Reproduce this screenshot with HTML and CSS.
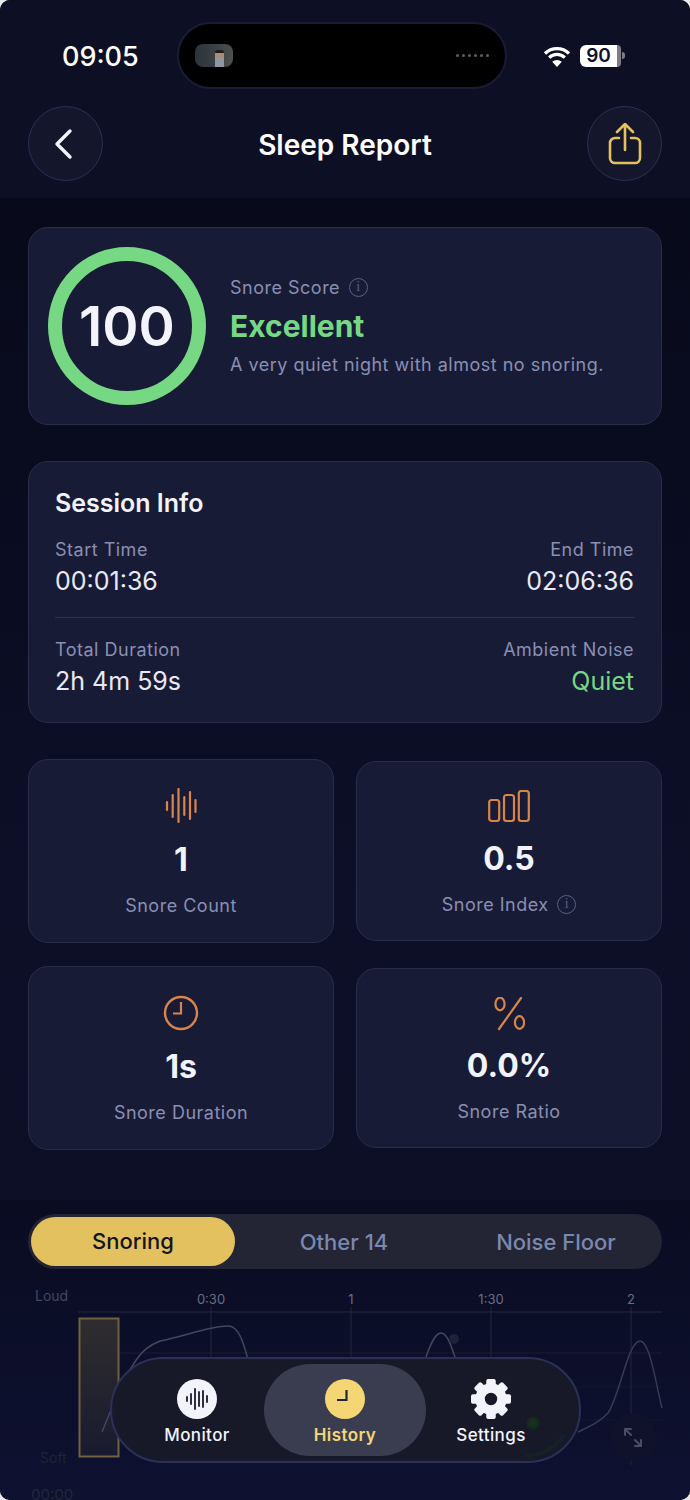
FILE: index.html
```html
<!DOCTYPE html>
<html lang="en">
<head>
    <meta charset="UTF-8">
    <meta name="viewport" content="width=device-width, initial-scale=1.0">
    <title>Sleep Report</title>
    <link rel="stylesheet" href="styles.css">
</head>
<body>
    <div class="screen">
        <div class="header">
            <div class="status">
                <span class="clock">09:05</span>
                <div class="island">
                    <div class="thumb"><span class="thumb-man"></span></div>
                    <div class="dots"><i></i><i></i><i></i><i></i><i></i><i></i></div>
                </div>
                <div class="status-right">
                    <svg class="wifi" width="28" height="22" viewBox="0 0 28 22">
                        <path d="M2 8.500a17 17 0 0 1 24 0M6.200 12.600a11 11 0 0 1 15.600 0" fill="none" stroke="#fff" stroke-width="3.200"/>
                        <path d="M14 22l-4.800-5.200a7 7 0 0 1 9.600 0z" fill="#fff"/>
                    </svg>
                    <span class="battery">90</span>
                    <span class="battery-cap"></span>
                    <span class="battery-nub"></span>
                </div>
            </div>
            <div class="title-bar">
                <button class="round-btn">
                    <svg width="24" height="32" viewBox="0 0 24 32"><path d="M16 3L3 16l13 13" fill="none" stroke="#f2f3fb" stroke-width="3.400" stroke-linecap="round" stroke-linejoin="round"/></svg>
                </button>
                <h1>Sleep Report</h1>
                <button class="round-btn">
                    <svg width="34" height="42" viewBox="0 0 34 42"><path d="M11 15H7a5 5 0 0 0-5 5v15a5 5 0 0 0 5 5h20a5 5 0 0 0 5-5V20a5 5 0 0 0-5-5h-4M17 27V2M9 9l8-8 8 8" fill="none" stroke="#e3c15f" stroke-width="2.600" stroke-linecap="round" stroke-linejoin="round"/></svg>
                </button>
            </div>
        </div>

        <div class="content">
            <div class="card score-card">
                <div class="ring">100</div>
                <div class="score-text">
                    <div class="muted">Snore Score <span class="info">i</span></div>
                    <div class="score-word">Excellent</div>
                    <div class="muted">A very quiet night with almost no snoring.</div>
                </div>
            </div>

            <div class="card session">
                <h2>Session Info</h2>
                <div class="session-row">
                    <div>
                        <div class="muted">Start Time</div>
                        <div class="session-val">00:01:36</div>
                    </div>
                    <div class="right">
                        <div class="muted">End Time</div>
                        <div class="session-val">02:06:36</div>
                    </div>
                </div>
                <div class="session-row session-row-last">
                    <div>
                        <div class="muted">Total Duration</div>
                        <div class="session-val">2h 4m 59s</div>
                    </div>
                    <div class="right">
                        <div class="muted">Ambient Noise</div>
                        <div class="session-val quiet">Quiet</div>
                    </div>
                </div>
            </div>

            <div class="stats">
                <div class="card stat">
                    <svg class="stat-icon" width="32" height="36" viewBox="0 0 32 36"><path d="M2 14v8M7.700 7v22M13.500 1v33M19.300 9v18M25 4v27M30.500 12v12" fill="none" stroke="#d9854a" stroke-width="2.200" stroke-linecap="round"/></svg>
                    <div class="stat-val">1</div>
                    <div class="muted">Snore Count</div>
                </div>
                <div class="card stat stat-alt">
                    <svg class="stat-icon" width="42" height="36" viewBox="0 0 42 36"><g fill="none" stroke="#d9854a" stroke-width="2.200"><rect x="1.200" y="10" width="10" height="21" rx="2.500"/><rect x="16" y="5" width="10" height="26" rx="2.500"/><rect x="30.800" y="1" width="10" height="30" rx="2.500"/></g></svg>
                    <div class="stat-val">0.5</div>
                    <div class="muted">Snore Index <span class="info">i</span></div>
                </div>
                <div class="card stat">
                    <svg class="stat-icon" width="36" height="36" viewBox="0 0 36 36"><circle cx="18" cy="18" r="16" fill="none" stroke="#d9854a" stroke-width="2.400"/><path d="M18 7v11.500H10" fill="none" stroke="#d9854a" stroke-width="2.200"/></svg>
                    <div class="stat-val">1s</div>
                    <div class="muted">Snore Duration</div>
                </div>
                <div class="card stat stat-alt">
                    <svg class="stat-icon" width="32" height="36" viewBox="0 -1 32 36"><g fill="none" stroke="#d9854a" stroke-width="2.200"><ellipse cx="7" cy="6" rx="4.600" ry="6.300"/><ellipse cx="26.500" cy="24.500" rx="4.600" ry="6.300"/><path d="M28 0L6 31" stroke-linecap="round"/></g></svg>
                    <div class="stat-val">0.0%</div>
                    <div class="muted">Snore Ratio</div>
                </div>
            </div>
        </div>

        <div class="bottom">
            <div class="tabs">
                <div class="tab active">Snoring</div>
                <div class="tab tab-other">Other 14</div>
                <div class="tab tab-noise">Noise Floor</div>
            </div>
            <div class="chart">
                <svg width="690" height="230" viewBox="0 0 690 230">
                    <defs>
                        <linearGradient id="barFill" x1="0" y1="0" x2="0" y2="1">
                            <stop offset="0" stop-color="#2f2d2e"/>
                            <stop offset="1" stop-color="#191a2e"/>
                        </linearGradient>
                    </defs>
                    <g fill="none">
                        <path d="M78 42H662" stroke="#23263d"/>
                        <path d="M78 83H662" stroke="#191c33"/>
                        <path d="M78 117H662" stroke="#161930"/>
                        <path d="M78 150H662" stroke="#13162c"/>
                        <path d="M211 37V160M351 37V160M491 37V160M631 37V195" stroke="#24273e"/>
                    </g>
                    <circle cx="633" cy="167" r="24" fill="#0f122a"/>
                    <rect class="bar" x="79.500" y="48.500" width="39" height="138"/>
                    <path d="M102 162C115 130 125 105 133 95C142 80 150 75 160 71C185 66 210 56 228 56C238 56 243 70 248 90" fill="none" stroke="#44475f" stroke-width="1.500"/>
                    <path d="M425 90C430 75 435 63 441 63C447 63 451 75 456 90" fill="none" stroke="#44475f" stroke-width="1.500"/>
                    <path d="M578 162C590 156 600 152 608 143C620 125 628 71 640 71C650 71 656 115 662 138" fill="none" stroke="#383b52" stroke-width="1.500"/>
                    <circle cx="454" cy="69" r="5" fill="#1f2238"/>
                    <text class="axis-y" x="35" y="31">Loud</text>
                    <text class="axis-soft" x="40" y="193">Soft</text>
                    <text class="axis-time" x="31" y="230">00:00</text>
                    <text class="axis-x" x="211" y="34">0:30</text>
                    <text class="axis-x" x="351" y="34">1</text>
                    <text class="axis-x" x="491" y="34">1:30</text>
                    <text class="axis-x" x="631" y="34">2</text>
                    <path d="M625 165v-6h6M625 159l6 6M641 170v6h-6M641 176l-6-6" fill="none" stroke="#4a4d63" stroke-width="2" stroke-linecap="round" stroke-linejoin="round"/>
                </svg>
            </div>
        </div>

        <div class="nav">
            <svg class="nav-glow" width="60" height="60" viewBox="0 0 60 60">
                <circle cx="15" cy="12" r="6" fill="#17301f"/>
                <path d="M8 45C25 44 38 36 46 24" fill="none" stroke="#172c22" stroke-width="2"/>
            </svg>
            <div class="nav-item nav-monitor">
                <span class="nav-disc">
                    <svg width="26" height="26" viewBox="0 0 26 26"><path d="M3 11v4M7 8v10M11 3v20M15 6v14M19 5v16M23 10v6" fill="none" stroke="#181a2c" stroke-width="1.800" stroke-linecap="round"/></svg>
                </span>
                <span>Monitor</span>
            </div>
            <div class="nav-item nav-active">
                <span class="nav-disc">
                    <svg width="24" height="24" viewBox="0 0 24 24"><path d="M13.500 3v10H4" fill="none" stroke="#23253a" stroke-width="2.200"/></svg>
                </span>
                <span>History</span>
            </div>
            <div class="nav-item nav-settings">
                <svg class="gear" width="42" height="40" viewBox="0 0 42 42">
                    <circle cx="21" cy="21" r="11.500" fill="none" stroke="#f2f3fb" stroke-width="10"/>
                    <g fill="#f2f3fb">
                        <rect x="16" y="0" width="10" height="9" rx="2"/>
                        <rect x="16" y="0" width="10" height="9" rx="2" transform="rotate(45 21 21)"/>
                        <rect x="16" y="0" width="10" height="9" rx="2" transform="rotate(90 21 21)"/>
                        <rect x="16" y="0" width="10" height="9" rx="2" transform="rotate(135 21 21)"/>
                        <rect x="16" y="0" width="10" height="9" rx="2" transform="rotate(180 21 21)"/>
                        <rect x="16" y="0" width="10" height="9" rx="2" transform="rotate(225 21 21)"/>
                        <rect x="16" y="0" width="10" height="9" rx="2" transform="rotate(270 21 21)"/>
                        <rect x="16" y="0" width="10" height="9" rx="2" transform="rotate(315 21 21)"/>
                    </g>
                </svg>
                <span>Settings</span>
            </div>
        </div>
    </div>
</body>
</html>
```

FILE: styles.css
```css
* {
    box-sizing: border-box;
}
html, body {
    margin: 0;
    padding: 0;
    background-color: #e9e9ec;
}
body {
    font-family: Inter, "Liberation Sans", sans-serif;
    color: #f2f3fb;
}
.screen {
    position: relative;
    width: 690px;
    height: 1500px;
    overflow: hidden;
    border-radius: 10px;
    background: linear-gradient(#050816, #0d0f28 60%, #0c0e24);
}

/* Header */
.header {
    height: 198px;
    padding: 22px 28px 0;
    background-color: #0d0f24;
}
.status {
    display: flex;
    align-items: center;
    height: 67px;
}
.clock {
    width: 149px;
    padding-left: 34px;
    padding-top: 1px;
    font-size: 27px;
    font-weight: 500;
    color: #fff;
}
.island {
    display: flex;
    align-items: center;
    justify-content: space-between;
    width: 330px;
    height: 67px;
    padding: 0 16px 0 16px;
    border: 2px solid #1a1c35;
    border-radius: 34px;
    background-color: #000;
}
.thumb {
    display: flex;
    justify-content: flex-end;
    align-items: flex-end;
    width: 38px;
    height: 23px;
    padding-right: 9px;
    border-radius: 8px;
    background: linear-gradient(90deg, #2c3339, #3c4247 60%, #50504c);
}
.thumb-man {
    width: 9px;
    height: 17px;
    border-radius: 3px 3px 0 0;
    background: linear-gradient(#1c1c1c 15%, #b08a70 15%, #b08a70 45%, #8f97a5 45%);
}
.dots {
    display: flex;
    gap: 3px;
}
.dots i {
    width: 3px;
    height: 3px;
    border-radius: 50%;
    background-color: #5d5f66;
}
.status-right {
    display: flex;
    align-items: center;
    padding-left: 36px;
}
.wifi {
    margin-right: 9px;
}
.battery {
    width: 37px;
    height: 22px;
    border-radius: 6px 0 0 6px;
    background-color: #fff;
    color: #10122a;
    font-size: 19px;
    font-weight: 600;
    line-height: 22px;
    text-align: center;
}
.battery-cap {
    width: 4px;
    height: 22px;
    border-radius: 0 6px 6px 0;
    background-color: #7c7d85;
}
.battery-nub {
    width: 3px;
    height: 7px;
    margin-left: 1px;
    border-radius: 0 3px 3px 0;
    background-color: #7c7d85;
}
.title-bar {
    display: flex;
    justify-content: space-between;
    align-items: center;
    margin-top: 17px;
}
.title-bar h1 {
    margin: 2px 0 0;
    font-size: 28px;
    font-weight: 600;
    color: #fff;
}
.round-btn {
    display: flex;
    justify-content: center;
    align-items: center;
    width: 75px;
    height: 75px;
    padding: 0;
    border: 1.500px solid #2c3055;
    border-radius: 50%;
    background-color: #14162c;
}

/* Cards */
.content {
    padding: 29px 28px 0;
}
.card {
    border: 1.500px solid #2a2d48;
    border-radius: 20px;
    background-color: #181b36;
}
.muted {
    color: #8a8fb2;
    font-size: 18px;
    line-height: 22px;
    letter-spacing: .5px;
}
.info {
    display: inline-block;
    width: 19px;
    height: 19px;
    margin: 1px 0 0 3px;
    border: 1.500px solid #5b5f85;
    border-radius: 50%;
    color: #5b5f85;
    font-family: "Liberation Serif", serif;
    font-size: 14px;
    line-height: 16px;
    letter-spacing: 0;
    text-align: center;
    vertical-align: top;
}
.score-card {
    display: flex;
    align-items: center;
    gap: 24px;
    height: 198px;
    padding-left: 19px;
}
.ring {
    display: flex;
    justify-content: center;
    align-items: center;
    width: 158px;
    height: 158px;
    border: 14px solid #76d883;
    border-radius: 50%;
    font-size: 55px;
    font-weight: 600;
}
.score-word {
    margin: 9px 0 10px;
    color: #76d883;
    font-size: 30px;
    font-weight: 700;
}
.session {
    margin-top: 36px;
    height: 262px;
    padding: 26px 27px 0 26px;
}
.session h2 {
    margin: 0 0 21px;
    font-size: 25px;
    font-weight: 600;
}
.session-row {
    display: flex;
    justify-content: space-between;
    height: 79px;
    border-bottom: 1px solid #2f3250;
}
.session-row-last {
    margin-top: 21px;
    border-bottom: none;
}
.session-val {
    margin-top: 5px;
    color: #e8e9f5;
    font-size: 25px;
}
.right {
    text-align: right;
}
.quiet {
    color: #76d883;
}
.stats {
    display: grid;
    grid-template-columns: 1fr 1fr;
    align-items: center;
    gap: 23px 22px;
    margin-top: 36px;
}
.stat {
    display: flex;
    flex-direction: column;
    align-items: center;
    height: 184px;
    padding-top: 28px;
}
.stat-alt {
    height: 180px;
}
.stat-icon {
    height: 36px;
}
.stat-val {
    margin: 16px 0 15px;
    font-size: 32px;
    font-weight: 700;
    line-height: 40px;
}
.stat-alt .stat-val {
    margin: 13px 0 15px;
}

/* Bottom section */
.bottom {
    position: absolute;
    top: 1200px;
    left: 0;
    right: 0;
    height: 300px;
    padding: 14px 28px 0;
    background: linear-gradient(#0a0c22, #0e1130);
}
.tabs {
    display: flex;
    align-items: center;
    height: 55px;
    padding: 3px;
    border-radius: 28px;
    background-color: #232434;
}
.tab {
    color: #7a88b0;
    font-size: 22px;
    font-weight: 500;
    text-align: center;
}
.tab.active {
    width: 204px;
    height: 49px;
    border-radius: 25px;
    background-color: #e3c15f;
    color: #14141c;
    line-height: 49px;
}
.tab-other {
    width: 218px;
}
.tab-noise {
    width: 206px;
}
.chart {
    position: absolute;
    top: 70px;
    left: 0;
}
.chart svg {
    display: block;
    overflow: visible;
}
.bar {
    fill: url(#barFill);
    stroke: #6e6240;
    stroke-width: 2;
}
.chart text {
    font-family: Inter, sans-serif;
    font-size: 13px;
    fill: #5a5d72;
}
.chart .axis-y {
    font-size: 14px;
    fill: #44475f;
}
.chart .axis-soft {
    font-size: 14px;
    fill: #1f2236;
}
.chart .axis-time {
    font-size: 15px;
    fill: #23263c;
}
.chart .axis-x {
    text-anchor: middle;
    fill: #6a6d80;
}

/* Floating nav */
.nav {
    position: absolute;
    left: 110px;
    top: 1357px;
    display: flex;
    align-items: center;
    width: 471px;
    height: 106px;
    border: 2px solid #2b3156;
    border-radius: 53px;
    background-color: #171929;
}
.nav-glow {
    position: absolute;
    left: 406px;
    top: 52px;
    filter: blur(1px);
}
.nav-item {
    position: relative;
    display: flex;
    flex-direction: column;
    align-items: center;
    justify-content: center;
    flex-shrink: 0;
    gap: 6px;
    height: 92px;
    padding-top: 4px;
    font-size: 17px;
    font-weight: 500;
    letter-spacing: .4px;
}
.nav-monitor {
    width: 134px;
    margin-left: 18px;
}
.nav-active {
    width: 162px;
    border-radius: 46px;
    background-color: #3a3d50;
    color: #f5d675;
    font-weight: 600;
}
.nav-settings {
    width: 130px;
}
.nav-disc {
    display: flex;
    justify-content: center;
    align-items: center;
    width: 40px;
    height: 40px;
    border-radius: 50%;
    background-color: #f2f3fb;
}
.nav-active .nav-disc {
    background-color: #f5d675;
}
```
